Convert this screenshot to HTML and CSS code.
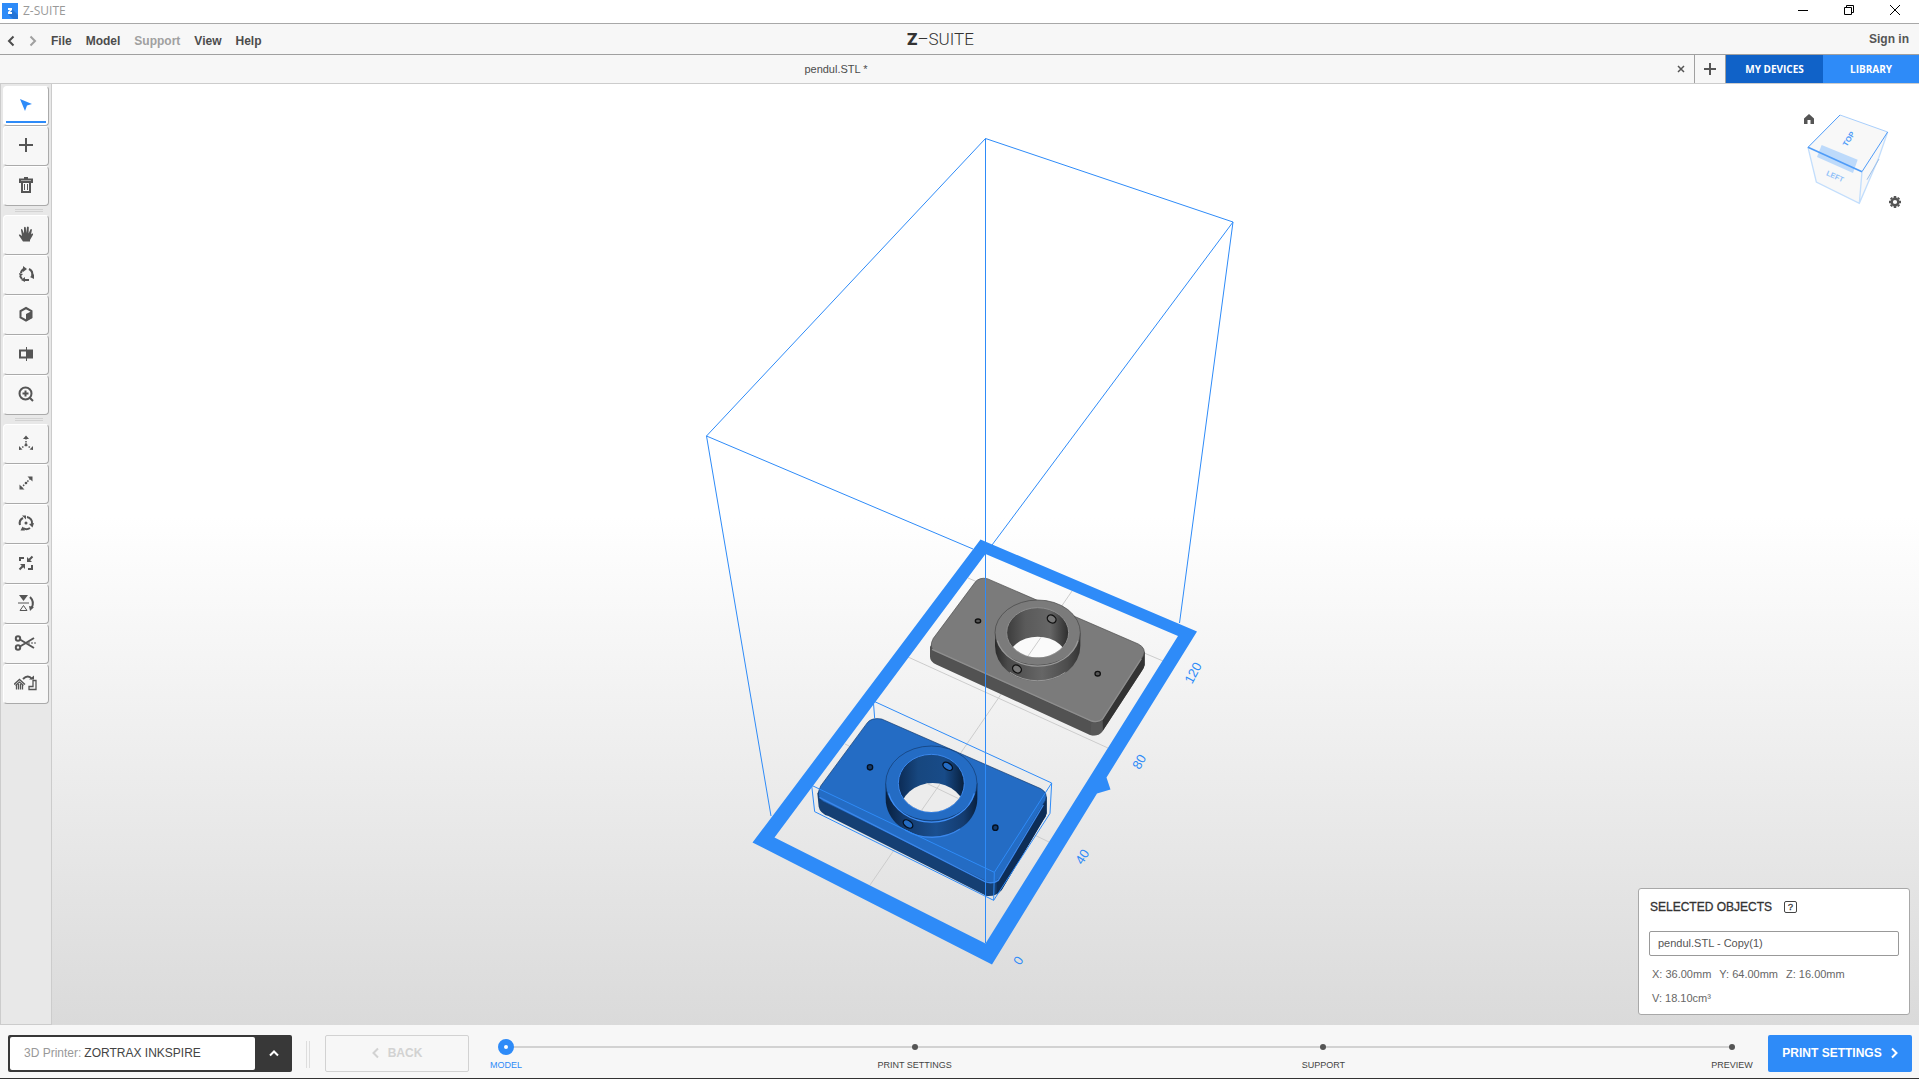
FILE: index.html
```html
<!DOCTYPE html>
<html lang="en">
<head>
<meta charset="utf-8">
<title>Z-SUITE</title>
<link rel="stylesheet" href="styles.css">
</head>
<body>
<header class="titlebar">
  <svg class="app-icon" viewBox="0 0 16 16"><rect width="16" height="16" fill="#2e8bf8"/><path d="M10 6l6 6v4h-5l-5-5z" fill="#2474d6"/><path d="M6 5h4v2l-2 2h2v2H6V9l2-2H6z" fill="#fff"/></svg>
  <span class="app-name">Z-SUITE</span>
  <div class="window-controls">
    <button aria-label="Minimize"><svg viewBox="0 0 10 10"><path d="M0 5.500h10"/></svg></button>
    <button aria-label="Restore"><svg viewBox="0 0 10 10"><path d="M.5 2.500h7v7h-7zM2.500 2.500v-2h7v7h-2"/></svg></button>
    <button aria-label="Close"><svg viewBox="0 0 10 10"><path d="M0 0l10 10M10 0L0 10"/></svg></button>
  </div>
</header>

<nav class="menubar">
  <button class="history" aria-label="Undo"><svg viewBox="0 0 8 12"><path d="M6.500 1.500L2 6l4.500 4.500"/></svg></button>
  <button class="history off" aria-label="Redo"><svg viewBox="0 0 8 12"><path d="M1.500 1.500L6 6l-4.500 4.500"/></svg></button>
  <button class="menu">File</button>
  <button class="menu">Model</button>
  <button class="menu" disabled>Support</button>
  <button class="menu">View</button>
  <button class="menu">Help</button>
  <div class="logo"><b>Z</b>–SUITE</div>
  <a class="signin" href="#signin">Sign in</a>
</nav>

<div class="tabbar">
  <div class="tab"><span>pendul.STL *</span>
    <button class="tab-close" aria-label="Close tab"><svg viewBox="0 0 8 8"><path d="M1 1l6 6M7 1L1 7"/></svg></button>
  </div>
  <button class="tab-new" aria-label="New tab"><svg viewBox="0 0 12 12"><path d="M6 0v12M0 6h12"/></svg></button>
  <button class="side-tab devices">MY DEVICES</button>
  <button class="side-tab">LIBRARY</button>
</div>

<main class="workspace">
  <aside class="toolbar">
    <div class="tools">
      <button class="on" aria-label="Select"><svg viewBox="0 0 24 24"><path fill="#2e8bf8" d="M6 6l12 5-5 1.500L11 18z"/></svg></button>
      <button aria-label="Add"><svg viewBox="0 0 24 24"><path class="s" d="M12 5v14M5 12h14"/></svg></button>
      <button aria-label="Delete"><svg viewBox="0 0 24 24"><path class="s" d="M6 6.500h12v2.500H6zM8 10v9h8v-9M10 5h4"/><path class="t" d="M10.500 11v6M13.500 11v6"/></svg></button>
    </div>
    <div class="tools">
      <button aria-label="Pan"><svg viewBox="0 0 24 24"><path class="f" d="M9 19.500L5 13.500q-.5-1.500 1-1l2 1.500-1-6q0-1.500 1.200-.8L10 11.500V5.500q.9-1.500 1.800 0l.4 5.500.8-6q1-1.200 1.800.3L14.600 11.500l1.900-4.200q1.300-.6 1.400.6L17 12.500l1-1q1.500-.3 1 1.200L16 18v1.500z"/></svg></button>
      <button aria-label="Rotate view"><svg viewBox="0 0 24 24"><path class="s" d="M7 11a5 5 0 0 1 3-4M15 7a6 6 0 0 1 3 7M15 18h-5M6 14l2 3"/><path class="f" d="M9 4l4 3-4 3zM20 12v5l-4-2zM11 15v5l-4-2zM5 11l4 1-3 3z"/></svg></button>
      <button aria-label="View modes"><svg viewBox="0 0 24 24"><path class="s" d="M12 6l5.500 3v6.500L12 18.500l-5.500-3V9z"/><path class="f" d="M12 12l6-3v7l-6 3z"/></svg></button>
      <button aria-label="Cross-section"><svg viewBox="0 0 24 24"><path class="s" d="M12 8.500H6v7h6"/><path class="f" d="M12 7.500h7v9h-7z"/><path class="t" d="M12.500 5v14"/></svg></button>
      <button aria-label="Zoom"><svg viewBox="0 0 24 24"><circle class="s" cx="11.500" cy="11.500" r="6"/><path class="s" d="M11.500 8.500v6M8.500 11.500h6M16 16l3 3"/></svg></button>
    </div>
    <div class="tools">
      <button aria-label="Move"><svg viewBox="0 0 24 24"><path class="s dots" d="M12 7v7M12 14l-5 3M12 14l5 3"/><path class="f" d="M12 4.500l3 3.500H9zM5 19v-4l3.500 3.500zM19 19v-4l-3.500 3.500z"/><circle class="f" cx="12" cy="13.500" r="1.300"/></svg></button>
      <button aria-label="Scale"><svg viewBox="0 0 24 24"><path class="s dots" d="M7 17L17 7"/><path class="f" d="M18.500 5.500v5l-5-5zM5.500 18.500v-5l5 5z"/><circle class="f" cx="12" cy="12" r="1.300"/></svg></button>
      <button aria-label="Rotate"><svg viewBox="0 0 24 24"><path class="s" d="M6 14a6 6 0 0 1 3-7M13 6a6 6 0 0 1 5 7M16 17a6 6 0 0 1-7 0"/><path class="f" d="M8 4.500h4v4zM20 12l-1.500 4.500L15 13zM11 19.500H6.500l2-4z"/><circle class="f" cx="12" cy="12" r="1.500"/></svg></button>
      <button aria-label="Fit size"><svg viewBox="0 0 24 24"><path class="s" d="M6 10V7h4M18 14v4h-4M5.500 18.500L9 15M18.500 5.500L15 9"/><path class="f" d="M6 13h5v5l-2-2zM13 6v5h5l-2-2z"/></svg></button>
      <button aria-label="Mirror"><svg viewBox="0 0 24 24"><path class="f" d="M5 4h9l-4.500 6z"/><path class="t" d="M4 12h11M6 19.500h7L9.500 14.500z"/><path class="s" d="M16 6q5 5 1.500 11"/><path class="f" d="M15 15l5 1-4 4z"/></svg></button>
      <button aria-label="Split"><svg viewBox="0 0 24 24"><circle class="s" cx="4" cy="7.500" r="2.200"/><circle class="s" cx="4" cy="16.500" r="2.200"/><path class="s" d="M6 8.500L20 17M6 15.500L20 7"/><path class="t dash" d="M14 12h9"/></svg></button>
      <button aria-label="Auto-placement"><svg viewBox="0 0 24 24"><path class="h" d="M0 13.500L5.500 8.500l5.500 5M1.500 14.500l4-3.500 4 3.500M2.500 14v4.500M4.500 13v5.500M6.500 13v5.500M8.500 14v4.500M15 18.500v-3h4v-6h3v9z"/><path class="s" d="M9 8q5-5 9 0"/><path class="f" d="M15 8.500h5v-4z"/></svg></button>
    </div>
  </aside>

  <section class="viewport">
    <svg class="scene" viewBox="52 84 1867 941" font-family="Liberation Sans, Arial, sans-serif">
      <defs>
        <linearGradient id="gSide"><stop offset="0" stop-color="#2b2b2b"/><stop offset=".15" stop-color="#4a4a4a"/><stop offset=".55" stop-color="#666"/><stop offset=".85" stop-color="#4c4c4c"/><stop offset="1" stop-color="#333"/></linearGradient>
        <linearGradient id="gBore"><stop offset="0" stop-color="#3c3c3c"/><stop offset=".3" stop-color="#5a5a5a"/><stop offset=".7" stop-color="#666"/><stop offset="1" stop-color="#2c2c2c"/></linearGradient>
        <linearGradient id="bSide"><stop offset="0" stop-color="#08203f"/><stop offset=".2" stop-color="#13396b"/><stop offset=".55" stop-color="#1a4f90"/><stop offset=".85" stop-color="#143c70"/><stop offset="1" stop-color="#08203f"/></linearGradient>
        <linearGradient id="bBore"><stop offset="0" stop-color="#0c2b55"/><stop offset=".3" stop-color="#17477f"/><stop offset=".7" stop-color="#184b88"/><stop offset="1" stop-color="#081f3c"/></linearGradient>
        <clipPath id="gHole"><ellipse cx="773" cy="308" rx="92" ry="74"/></clipPath>
        <clipPath id="bHole"><ellipse cx="454" cy="760" rx="98" ry="86"/></clipPath>
      </defs>

      <!-- build platform -->
      <g fill="none" stroke="#ccc"><path d="M968 578l195 83M908 657l200 91M845 744l204 98M1072 591L870 885"/></g>
      <path fill="#2e8bf8" fill-rule="evenodd" d="M980.500 539.500L1197 631.500 1106.500 777.500l4 12-13.500 4L992 964.500 752.500 842.500zM985.500 554L774.500 837.500l211 106L1178 636z"/>

      <!-- models, drawn at three units to the pixel -->
      <svg x="780" y="530" width="440" height="440" viewBox="0 0 1320 1320">
        <g>
          <path fill="#525252" d="M450 350L600 150 1094 365v40q-2 8-7 16L968 603q-13 18-38 12L470 404q-20-8-20-24z"/>
          <path fill="#333" d="M966 572L1094 365v40q-2 8-7 16L968 603z"/>
          <path fill="#5e5e5e" d="M935 570h34v32q-13 18-38 12z" opacity=".6"/>
          <path fill="#7b7b7b" stroke="#4a4a4a" stroke-width="2" d="M460 325L585 157q12-16 37-11l453 196q25 13 15 36L968 568q-13 12-33 7L465 365q-20-13-5-40z"/>
          <path fill="none" stroke="#8e8e8e" stroke-width="4" d="M456 358L935 573q20 5 32-5L1084 386"/>
          <path fill="url(#gSide)" d="M645 308v40a128 106 0 0 0 256 0v-40z"/>
          <path fill="none" stroke="#999" stroke-width="3" d="M690 427a128 106 0 0 0 166 0"/>
          <ellipse cx="773" cy="308" rx="128" ry="98" fill="#7b7b7b" stroke="#444" stroke-width="2"/>
          <path fill="none" stroke="#999" stroke-width="4" d="M652 332a124 98 0 0 0 242 0"/>
          <ellipse cx="773" cy="308" rx="93" ry="75" fill="url(#gBore)" stroke="#8e8e8e" stroke-width="3"/>
          <g clip-path="url(#gHole)"><ellipse cx="773" cy="395" rx="92" ry="75" fill="#fafafa"/><path stroke="#ccc" stroke-width="3" d="M783 322L740 384"/></g>
          <g fill="#555" stroke="#111" stroke-width="4"><ellipse cx="594" cy="273" rx="8" ry="6"/><ellipse cx="953" cy="431" rx="8" ry="7"/><g fill="#777"><ellipse cx="815" cy="267" rx="14" ry="11" transform="rotate(35 815 267)"/><ellipse cx="711" cy="417" rx="14" ry="11" transform="rotate(35 711 417)"/></g></g>
        </g>
        <g>
          <path fill="#153f73" d="M112 790L280 570 800 800v50q-2 10-10 20L665 1080q-15 20-45 18L145 858q-25-8-29-28z"/>
          <path fill="#0d2d57" d="M650 1052L800 800v50q-2 10-10 20L665 1080q-8 8-15 12z"/>
          <path fill="#246cc4" stroke="#123a6c" stroke-width="2" d="M122 768L262 578q13-16 43-11l475 208q26 13 16 37L658 1045q-13 18-38 10L130 815q-25-15-8-47z"/>
          <path fill="none" stroke="#3a87ec" stroke-width="4" d="M118 802L615 1055q22 8 40-4L790 825"/>
          <path fill="url(#bSide)" d="M317 760v46a137 115 0 0 0 275 0v-46z"/>
          <path fill="none" stroke="#3a87ec" stroke-width="4" d="M375 900a137 115 0 0 0 165-3"/>
          <ellipse cx="454" cy="760" rx="137" ry="112" fill="#246cc4" stroke="#123a6c" stroke-width="2"/>
          <path fill="none" stroke="#3f8ff8" stroke-width="4" d="M326 790a132 112 0 0 0 257 0"/>
          <ellipse cx="454" cy="760" rx="99" ry="87" fill="url(#bBore)" stroke="#3a87ec" stroke-width="3"/>
          <g clip-path="url(#bHole)"><ellipse cx="458" cy="845" rx="98" ry="86" fill="#ececec"/><path stroke="#ccc" stroke-width="3" d="M480 762L424 842M440 760L540 808"/></g>
          <g fill="#123a6c" stroke="#051020" stroke-width="4"><circle cx="270" cy="712" r="8"/><circle cx="646" cy="893" r="8"/><g fill="#246cc4"><ellipse cx="503" cy="709" rx="16" ry="10" transform="rotate(35 503 709)"/><ellipse cx="384" cy="882" rx="16" ry="10" transform="rotate(35 384 882)"/></g></g>
          <path fill="none" stroke="#2e8bf8" stroke-width="3" d="M284 565L280 513 815 759l-5 91L641 1111 104 845 95 766 643 1027 815 759M643 1027l-2 84"/>
        </g>
      </svg>

      <!-- build volume -->
      <path fill="none" stroke="#2e8bf8" d="M985.500 943V138.500L1233 222 992 545M985.500 138.500L706.500 436 973 549M706.500 436L771 816M1233 222L1179.500 623"/>

      <g fill="#2e8bf8" font-size="13" text-anchor="middle">
        <text transform="translate(1197 675) rotate(-62)">120</text>
        <text transform="translate(1143 764) rotate(-60)">80</text>
        <text transform="translate(1086 859) rotate(-58)">40</text>
        <text transform="translate(1022 963) rotate(-56)">0</text>
      </g>
    </svg>

    <div class="view-cube">
      <button class="home" aria-label="Home view"><svg viewBox="0 0 10 10"><path d="M0 4.500L5 0l5 4.500V10H6.500V6h-3v4H0z"/></svg></button>
      <svg class="cube" viewBox="440 340 246 276" font-family="Liberation Sans, Arial, sans-serif">
        <path fill="#f8f8f8" d="M539 346l143 51-27 78-58 136-129-64-25-104z"/>
        <path fill="#bddafb" d="M484 436l108 44-14 40-108-48z"/>
        <path fill="none" stroke="#c3defc" stroke-width="4" d="M443 443l25 104 129 64 58-136 27-78M605 516l-8 95"/>
        <path fill="none" stroke="#a9cffc" stroke-width="3" d="M539 346l143 51"/>
        <path fill="none" stroke="#4f9cf8" stroke-width="3" d="M539 346l-96 97M682 397l-77 119"/>
        <path fill="none" stroke="#4f9cf8" stroke-width="5" d="M443 443l162 73"/>
        <path stroke="#9dbfe8" stroke-width="3" d="M656 478l-36 62"/>
        <g font-weight="700" text-anchor="middle"><text font-size="23" fill="#4f9cf8" transform="translate(572 422) rotate(-58)">TOP</text><text font-size="22" fill="#8fc0f9" transform="translate(521 537) rotate(24)">LEFT</text></g>
      </svg>
      <button class="gear" aria-label="View settings"><svg viewBox="-6 -6 12 12"><circle r="3.300" fill="none" stroke="#555" stroke-width="2.400"/><path stroke="#555" stroke-width="2.500" d="M0-6v2M0 4v2M-6 0h2M4 0h2M-4.200-4.200l1.200 1.200M4.200-4.200L3-3M-4.200 4.200L-3 3M4.200 4.200L3 3"/></svg></button>
    </div>

    <section class="selection">
      <h2>SELECTED OBJECTS <button class="help" aria-label="Help">?</button></h2>
      <input type="text" aria-label="Object name" value="pendul.STL - Copy(1)">
      <p><span>X: 36.00mm</span><span>Y: 64.00mm</span><span>Z: 16.00mm</span></p>
      <p>V: 18.10cm³</p>
    </section>
  </section>
</main>

<footer class="bottombar">
  <div class="printer">
    <div class="printer-field">
      <label for="printer">3D Printer:</label>
      <select id="printer"><option>ZORTRAX INKSPIRE</option></select>
    </div>
    <button aria-label="Choose printer"><svg viewBox="0 0 12 8"><path d="M2 6.500l4-4 4 4"/></svg></button>
  </div>
  <span class="grip"></span>
  <button class="back" disabled><svg viewBox="0 0 8 12"><path d="M6 1.500L1.500 6 6 10.500"/></svg>BACK</button>
  <ol class="steps">
    <li class="current"><i></i><span>MODEL</span></li>
    <li><i></i><span>PRINT SETTINGS</span></li>
    <li><i></i><span>SUPPORT</span></li>
    <li><i></i><span>PREVIEW</span></li>
  </ol>
  <button class="next">PRINT SETTINGS<svg viewBox="0 0 8 12"><path d="M2 1.500L6.500 6 2 10.500"/></svg></button>
</footer>
</body>
</html>
```

FILE: styles.css
```css
* { box-sizing: border-box; }
body {
  margin: 0;
  min-height: 100vh;
  display: flex;
  flex-direction: column;
  font: 12px/16px "Liberation Sans", Arial, sans-serif;
  color: #4c4c4c;
  background: #f7f7f7;
}
button {
  display: flex;
  align-items: center;
  justify-content: center;
  margin: 0;
  padding: 0;
  border: 0;
  background: none;
  font: inherit;
  color: inherit;
}
svg { display: block; flex: none; }

.titlebar {
  display: flex;
  align-items: center;
  height: 24px;
  padding: 0 0 1px 2px;
  background: #fff;
  border-bottom: 1px solid #a8a8a8;
}
.app-icon { width: 16px; height: 16px; }
.app-name {
  margin-left: 5px;
  font-family: "Open Sans", "Noto Sans", sans-serif;
  color: #999;
}
.window-controls { display: flex; margin-left: auto; }
.window-controls button { width: 46px; height: 20px; padding: 0 2px 2px 0; }
.window-controls svg {
  width: 10px;
  height: 10px;
  overflow: visible;
  fill: none;
  stroke: #000;
}

.menubar {
  position: relative;
  display: flex;
  align-items: center;
  height: 31px;
  padding: 3px 10px 0 7px;
  border-bottom: 1px solid #a0a0a0;
  font-weight: 700;
}
.history { width: 8px; margin-right: 14px; }
.history svg { width: 8px; height: 12px; fill: none; stroke: #4c4c4c; stroke-width: 2; }
.history.off svg { stroke: #a0a0a0; }
.menu { margin-right: 14px; }
.menu:disabled { color: #a0a0a0; }
.logo {
  position: absolute;
  left: 0;
  right: 38px;
  top: 0;
  text-align: center;
  font: 300 17px/31px "Liberation Sans Narrow", Roboto, sans-serif;
  color: #333;
  pointer-events: none;
}
.logo b { font-weight: 900; }
.signin {
  margin-left: auto;
  padding-bottom: 3px;
  color: #555;
  text-decoration: none;
}

.tabbar {
  display: flex;
  height: 29px;
  border-bottom: 1px solid #ccc;
}
.tab {
  flex: 1;
  display: flex;
  align-items: center;
  font-size: 11px;
}
.tab span { flex: 1; text-align: center; }
.tab-close { width: 22px; height: 28px; padding-right: 4px; }
.tab-close svg { width: 8px; height: 8px; fill: none; stroke: #555; stroke-width: 1.5; }
.tab-new {
  width: 32px;
  border: solid #a0a0a0;
  border-width: 0 1px;
}
.tab-new svg { width: 12px; height: 12px; stroke: #555; stroke-width: 2; }
.side-tab {
  width: 96px;
  background: #2e8bf8;
  color: #fff;
  font: 700 10px/16px "Open Sans", "Noto Sans", sans-serif;
}
.side-tab.devices { width: 97px; background: #1062c8; }

.workspace { flex: 1; display: flex; }
.toolbar {
  width: 52px;
  padding: 2px 2px 0;
  background: #e8e8e8;
  border: solid #ccc;
  border-width: 0 1px 1px;
}
.tools + .tools {
  padding-top: 9px;
  background: linear-gradient(#d2d2d2 1px, transparent 1px 2px, #d2d2d2 2px 3px, transparent 3px) 12px 3px / 28px 3px no-repeat;
}
.tools button {
  position: relative;
  width: 46px;
  height: 40px;
  padding-bottom: 2px;
  background: #f7f7f7;
  border: 1px solid #fff;
  border-right-color: #aaa;
  border-bottom-color: #aaa;
  border-radius: 4px;
}
.tools svg { width: 24px; height: 24px; }
.tools .on { background: #fff; }
.tools .on::after {
  content: "";
  position: absolute;
  left: 2px;
  right: 2px;
  bottom: 2px;
  height: 2px;
  background: #2e8bf8;
}
.f { fill: #555; }
.s { fill: none; stroke: #555; stroke-width: 2; }
.t { fill: none; stroke: #555; }
.h { fill: none; stroke: #555; stroke-width: 1.3; }
.dash { stroke-dasharray: 2 1; }
.dots { stroke-width: 1.5; stroke-dasharray: 1.5 1.5; }

.viewport {
  position: relative;
  flex: 1;
  min-height: 700px;
  background: linear-gradient(#fff 46%, #dadada);
}
.scene { position: absolute; inset: 0; width: 100%; height: 100%; }

.view-cube {
  position: absolute;
  top: 30px;
  right: 18px;
  display: flex;
}
.home { width: 10px; height: 10px; }
.home svg { width: 10px; height: 10px; fill: #555; }
.cube { width: 82px; height: 92px; margin: -1px 0 0 -7px; }
.gear { width: 12px; height: 12px; align-self: flex-end; margin-bottom: -3px; }
.gear svg { width: 12px; height: 12px; }

.selection {
  position: absolute;
  right: 9px;
  bottom: 10px;
  width: 272px;
  padding: 10px 10px 8px;
  background: #fff;
  border: 1px solid #a8a8a8;
  border-radius: 3px;
  font-size: 11px;
  color: #666;
}
.selection h2 {
  display: flex;
  align-items: center;
  gap: 12px;
  margin: 0 0 16px 1px;
  font: 12px/16px "Liberation Sans", Arial, sans-serif;
  color: #333;
  -webkit-text-stroke: 0.3px #333;
}
.help {
  width: 13px;
  height: 12px;
  border: 1px solid #444;
  border-radius: 2px;
  font-size: 9px;
  line-height: 9px;
}
.selection input {
  display: block;
  width: 100%;
  height: 25px;
  padding: 0 8px 2px;
  border: 1px solid #999;
  border-radius: 2px;
  font: inherit;
  color: #555;
}
.selection p { display: flex; gap: 8px; margin: 8px 0 0 3px; }
.selection input + p { margin-top: 10px; }

.bottombar {
  display: flex;
  height: 54px;
  padding: 10px 7px 6px 8px;
  border-bottom: 1px solid #333;
}
.printer {
  display: flex;
  width: 284px;
  padding: 2px 0 2px 2px;
  background: #383838;
  border-radius: 2px;
}
.printer-field {
  flex: 1;
  display: flex;
  align-items: center;
  gap: 3px;
  padding: 0 0 2px 14px;
  background: #fff;
  border-radius: 2px;
}
.printer-field label { color: #999; }
.printer-field select {
  flex: 1;
  appearance: none;
  padding: 0;
  border: 0;
  background: none;
  font: inherit;
  color: #444;
}
.printer button { width: 37px; padding-bottom: 2px; }
.printer svg { width: 12px; height: 8px; fill: none; stroke: #fff; stroke-width: 2; }
.grip {
  width: 4px;
  margin: 6px 15px 4px 14px;
  border: solid #ddd;
  border-width: 0 1px;
}
.back {
  gap: 8px;
  width: 144px;
  padding-bottom: 2px;
  border: 1px solid #d2d2d2;
  border-radius: 2px;
  font-weight: 700;
  color: #d2d2d2;
}
.back svg, .next svg { width: 8px; height: 12px; fill: none; stroke: currentColor; stroke-width: 2; }
.steps {
  position: relative;
  flex: 1;
  display: flex;
  justify-content: space-between;
  margin: 0 20px 0 21px;
  padding: 3px 0 0;
  list-style: none;
  font-size: 9px;
  line-height: 12px;
  color: #444;
}
.steps::before {
  content: "";
  position: absolute;
  left: 16px;
  right: 16px;
  top: 11px;
  height: 2px;
  background: #d2d2d2;
}
.steps li {
  position: relative;
  display: flex;
  flex-direction: column;
  align-items: center;
  width: 32px;
  white-space: nowrap;
}
.steps i {
  width: 6px;
  height: 6px;
  margin: 6px 0 9px;
  border-radius: 50%;
  background: #555;
}
.steps .current { color: #2e8bf8; }
.steps .current i {
  width: 16px;
  height: 16px;
  margin: 1px 0 4px;
  border: 6px solid #2e8bf8;
  background: #fff;
}
.next {
  gap: 8px;
  width: 144px;
  padding-bottom: 2px;
  background: #2e8bf8;
  border-radius: 2px;
  font-weight: 700;
  color: #fff;
}
```
